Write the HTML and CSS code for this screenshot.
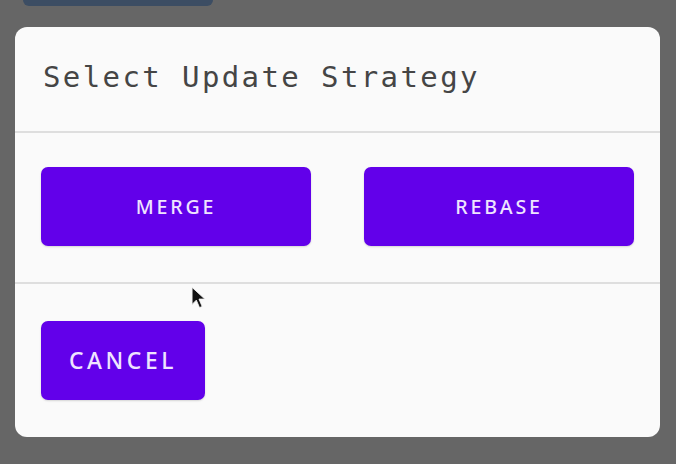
FILE: index.html
```html
<!DOCTYPE html>
<html>
<head>
<meta charset="utf-8">
<link rel="stylesheet" href="styles.css">
</head>
<body>
<div class="screen">
  <div class="topbar"></div>
  <div class="dialog">
    <div class="dialog-title">Select Update Strategy</div>
    <div class="divider"></div>
    <div class="choices">
      <button class="btn btn-wide">MERGE</button>
      <button class="btn btn-wide">REBASE</button>
    </div>
    <div class="divider"></div>
    <div class="actions">
      <button class="btn btn-cancel">CANCEL</button>
    </div>
  </div>
  <svg class="cursor" width="17" height="24" viewBox="0 0 16 22">
    <path d="M1 1 L1 17 L5 13 L8 20 L10.5 19 L7.5 12 L13 12 Z" fill="#111" stroke="#f4f4f4" stroke-width="0.8"/>
  </svg>
</div>
</body>
</html>
```
FILE: styles.css
```css
html, body {
  margin: 0;
  padding: 0;
  background: #666666;
}
.screen {
  position: relative;
  width: 676px;
  height: 464px;
  overflow: hidden;
  background: #666666;
  padding-top: 27px;
  box-sizing: border-box;
}
.topbar {
  position: absolute;
  left: 23px;
  top: -6px;
  width: 190px;
  height: 12px;
  border-radius: 6px;
  background: #3c4d63;
}
.dialog {
  margin-left: 15px;
  width: 645px;
  height: 410px;
  background: #fafafa;
  border-radius: 12px;
  display: flex;
  flex-direction: column;
  box-sizing: border-box;
}
.dialog-title {
  height: 104px;
  padding-left: 28px;
  box-sizing: border-box;
  padding-top: 30px;
  font-family: "DejaVu Sans Mono", monospace;
  font-size: 29px;
  letter-spacing: 2.4px;
  color: #454545;
  line-height: 40px;
}
.divider {
  height: 2px;
  background: #dedede;
}
.choices {
  display: flex;
  gap: 53px;
  padding: 34px 26px 36px 26px;
}
.btn {
  border: none;
  background: #6200ea;
  border-radius: 7px;
  color: #efe4ff;
  font-family: "Noto Sans", sans-serif;
  font-weight: 500;
  cursor: pointer;
  box-shadow: 0 1px 2px rgba(0,0,0,0.15);
  padding: 0;
}
.btn-wide {
  width: 270px;
  height: 79px;
  font-size: 19.6px;
  letter-spacing: 2.8px;
}
.actions {
  display: flex;
  padding: 37px 26px;
}
.btn-cancel {
  width: 164px;
  height: 79px;
  font-size: 22.8px;
  letter-spacing: 3.6px;
}
.cursor {
  position: absolute;
  left: 191px;
  top: 286px;
}
```
